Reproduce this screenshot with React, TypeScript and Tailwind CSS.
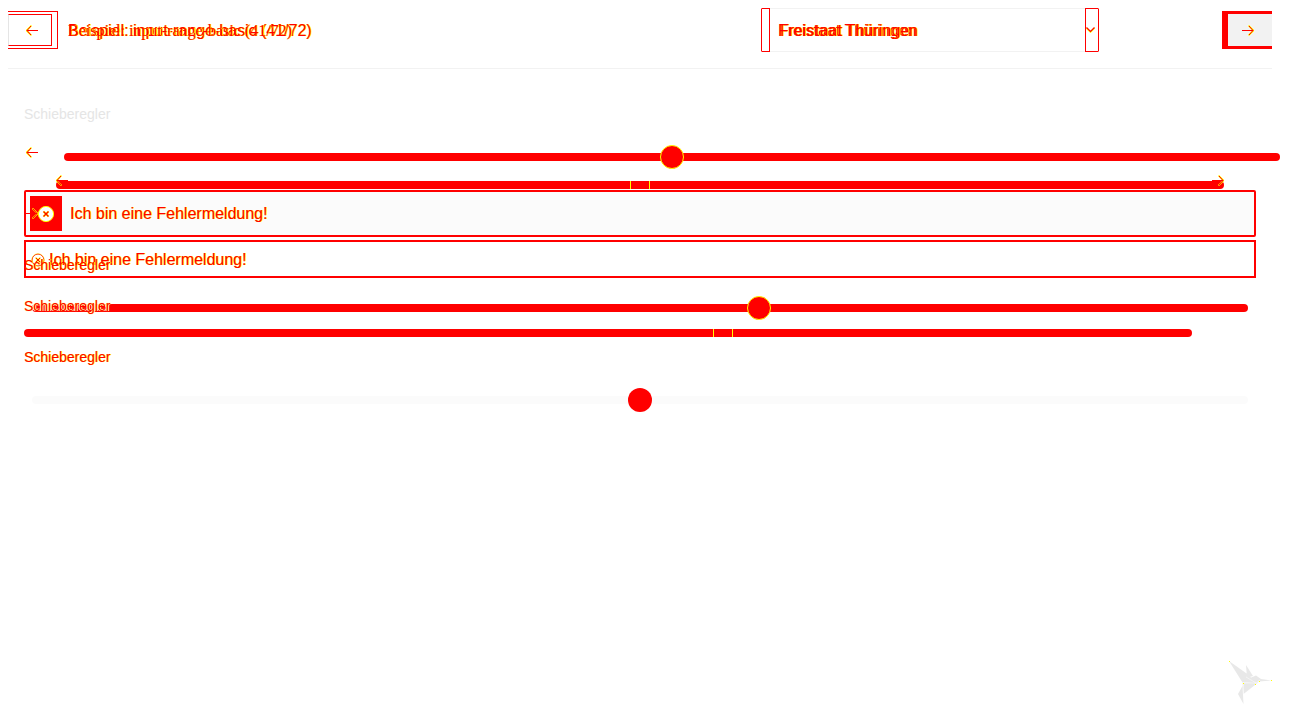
import React from "react";

const glow = "[text-shadow:1px_0_0_#ffff00]";

function Arrow({ flip = false }: { flip?: boolean }) {
  return (
    <svg viewBox="0 0 12 12" className="size-3 shrink-0" fill="none" aria-hidden="true">
      <g transform={flip ? "translate(12 0) scale(-1 1)" : undefined}>
        <path d="M5.5 .5 .5 5.5 5.5 10.5" stroke="#ffff00" strokeWidth="1.6" />
        <path d="M5 1 1 5.5 5 10M1 5.5h11" stroke="#ff0000" strokeWidth="1" />
      </g>
    </svg>
  );
}

function CircleX({ filled = false }: { filled?: boolean }) {
  return (
    <svg viewBox="0 0 16 16" className={filled ? "size-4" : "size-3.5"} fill="none" aria-hidden="true">
      <circle cx="8" cy="8" r={filled ? 7.6 : 7} fill="#ffffff" stroke="#ffff00" />
      {!filled && <circle cx="8" cy="8" r="6.7" stroke="#ff0000" strokeWidth=".8" />}
      <path d="m5.5 5.5 5 5m0-5-5 5" stroke="#ffff00" strokeWidth="2" />
      <path d="m5.5 5.5 5 5m0-5-5 5" stroke="#ff0000" strokeWidth="1.1" />
    </svg>
  );
}

const thumbRound =
  "[&::-webkit-slider-thumb]:size-6 [&::-webkit-slider-thumb]:appearance-none [&::-webkit-slider-thumb]:rounded-full [&::-webkit-slider-thumb]:bg-[#ff0000] [&::-webkit-slider-thumb]:-mt-2";
const thumbEdge =
  "[&::-webkit-slider-thumb]:border [&::-webkit-slider-thumb]:border-[#ffff00]";
const thumbFlat =
  "[&::-webkit-slider-thumb]:h-2 [&::-webkit-slider-thumb]:w-5 [&::-webkit-slider-thumb]:appearance-none [&::-webkit-slider-thumb]:bg-[#ff0000] [&::-webkit-slider-thumb]:border-x [&::-webkit-slider-thumb]:border-[#ffff00]";
const redTrack =
  "[&::-webkit-slider-runnable-track]:h-2 [&::-webkit-slider-runnable-track]:rounded-full [&::-webkit-slider-runnable-track]:bg-[#ff0000]";
const paleTrack =
  "[&::-webkit-slider-runnable-track]:h-2 [&::-webkit-slider-runnable-track]:rounded-full [&::-webkit-slider-runnable-track]:bg-[#fbfbfb]";

function Range({
  id,
  value,
  flat = false,
  pale = false,
}: {
  id: string;
  value: number;
  flat?: boolean;
  pale?: boolean;
}) {
  return (
    <input
      id={id}
      type="range"
      aria-label="Schieberegler"
      defaultValue={value}
      className={`m-0 block w-full min-w-0 flex-1 appearance-none bg-transparent ${
        flat ? `h-2 ${thumbFlat}` : `h-6 ${thumbRound}`
      } ${pale ? paleTrack : redTrack} ${!flat && !pale ? thumbEdge : ""}`}
    />
  );
}

function Header() {
  return (
    <header className="mx-2 flex items-center justify-between border-b border-[#f2f2f2] pb-4">
      <div className="flex items-center">
        <button
          type="button"
          aria-label="Zurück"
          className="flex h-[38px] w-[50px] items-center border border-l-0 border-[#ff0000]"
        >
          <span className="flex h-8 w-11 items-center border border-l-[#e5e5e5] border-y-[#ff0000] border-r-[#ff0000] pt-px pl-[17px]">
            <Arrow />
          </span>
        </button>
        <h1 className="ml-2.5 grid pt-0.5 text-base leading-6 whitespace-nowrap">
          <span className={`col-start-1 row-start-1 text-[#ff0000] ${glow}`}>
            Beispiel: input-range-basic (41/72)
          </span>
          <span
            aria-hidden="true"
            className={`col-start-1 row-start-1 font-['Liberation_Serif',serif] text-[#ff0000] ${glow}`}
          >
            Beispiel: input-range-basic (41/72)
          </span>
        </h1>
      </div>
      <div className="ml-auto flex h-11 w-[338px] border border-x-[#ff0000] border-y-[#f2f2f2]">
        <span className="-my-px w-2 border-y border-r border-[#ff0000]" />
        <div className="relative flex min-w-0 flex-1 items-center">
          <select
            aria-label="Theme"
            className={`h-full w-full appearance-none bg-transparent pt-0.5 pl-2 text-base text-[#ff0000] ${glow}`}
          >
            <option>Freistaat Thüringen</option>
          </select>
          <span
            aria-hidden="true"
            className={`pointer-events-none absolute left-2.5 pt-0.5 font-['Roboto',sans-serif] text-[#ff0000] ${glow}`}
          >
            Freistaat Thüringen
          </span>
        </div>
        <span className="-my-px flex w-[13px] items-center border-y border-l border-[#ff0000]">
          <svg viewBox="0 0 10 6" className="h-1.5 w-2.5" fill="none" aria-hidden="true">
            <path d="m.5 1 4 4 4-4" stroke="#ffff00" strokeWidth="1.6" />
            <path d="m.5 .5 4 4 4-4" stroke="#ff0000" strokeWidth="1.1" />
          </svg>
        </span>
      </div>
      <button
        type="button"
        aria-label="Weiter"
        className="ml-[123px] flex h-[38px] w-[50px] items-center border-y-3 border-l-6 border-[#ff0000] bg-[#f2f2f2] pt-px pl-3.5"
      >
        <Arrow flip />
      </button>
    </header>
  );
}

function Bird() {
  return (
    <svg viewBox="0 0 44 44" className="absolute right-10 bottom-4 size-11" aria-hidden="true">
      <path
        fill="#e8e8e8"
        d="M1 1 20 14.5 28 23 14.5 22.5ZM18 5 25 16 19 17.5ZM22 18 28 15.5 33 19 43.5 20.5 31 21.5 27 25 15.5 34 14.5 23 28 22.5ZM14.5 26 15.5 44 10 34Z"
      />
      <path d="m18 17 10 6H14.5M28 23l4-3M15.5 23v12" stroke="#fff" strokeWidth=".5" fill="none" />
      <path d="M1 1h1v1H1zM15 23h1v1h-1zM27 24h1v1h-1zM31 21h1v1h-1zM43 20h1v1h-1z" fill="#ffff00" />
    </svg>
  );
}

export default function App() {
  return (
    <div className="relative min-h-screen bg-white pt-2 pr-8 font-['Liberation_Sans',sans-serif]">
      <Header />
      <main>
        <label htmlFor="range-1" className="mt-[35px] ml-6 block text-sm leading-5 text-[#e5e5e5]">
          Schieberegler
        </label>
        <div className="mt-[21px] flex pl-6">
          <span className="mt-0.5 w-10 pl-0.5">
            <Arrow />
          </span>
          <Range id="range-1" value={50} />
        </div>
        <div className="relative mt-3 mr-14 ml-14">
          <Range id="range-2" value={50} flat />
          <span className="absolute -top-1.5 left-0">
            <Arrow />
          </span>
          <span className="absolute -top-1.5 right-0">
            <Arrow flip />
          </span>
        </div>
        <div className="relative mt-px mr-6 ml-6 flex h-[47px] items-center rounded-xs border-2 border-[#ff0000] bg-[#fbfbfb] px-1">
          <span className="flex h-[35px] w-8 items-center justify-center bg-[#ff0000]">
            <CircleX filled />
          </span>
          <p className={`ml-2 text-base text-[#ff0000] ${glow}`}>Ich bin eine Fehlermeldung!</p>
          <span className="absolute top-4 left-0">
            <Arrow flip />
          </span>
        </div>
        <div className="relative mt-[3px] mr-6 ml-6 flex h-[38px] items-center border-2 border-[#ff0000] px-[5px] pt-px">
          <CircleX />
          <p className={`ml-1 text-base text-[#ff0000] ${glow}`}>Ich bin eine Fehlermeldung!</p>
          <label
            htmlFor="range-3"
            className={`absolute top-[13px] -left-0.5 text-sm leading-5 text-[#ff0000] ${glow}`}
          >
            Schieberegler
          </label>
        </div>
        <div className="relative mt-[18px] mr-8 ml-8">
          <Range id="range-3" value={60} />
          <label
            htmlFor="range-4"
            className="absolute top-0 -left-2 text-sm leading-5 text-[#ff0000] [text-shadow:0_0_1px_#ffff00,1px_0_0_#ffffff,-1px_0_0_#ffffff]"
          >
            Schieberegler
          </label>
        </div>
        <div className="mt-[9px] mr-[88px] ml-6">
          <Range id="range-4" value={60} flat />
        </div>
        <label
          htmlFor="range-5"
          className={`mt-2.5 ml-6 block text-sm leading-5 text-[#ff0000] ${glow}`}
        >
          Schieberegler
        </label>
        <div className="mt-[21px] mr-8 ml-8">
          <Range id="range-5" value={50} pale />
        </div>
      </main>
      <Bird />
    </div>
  );
}
